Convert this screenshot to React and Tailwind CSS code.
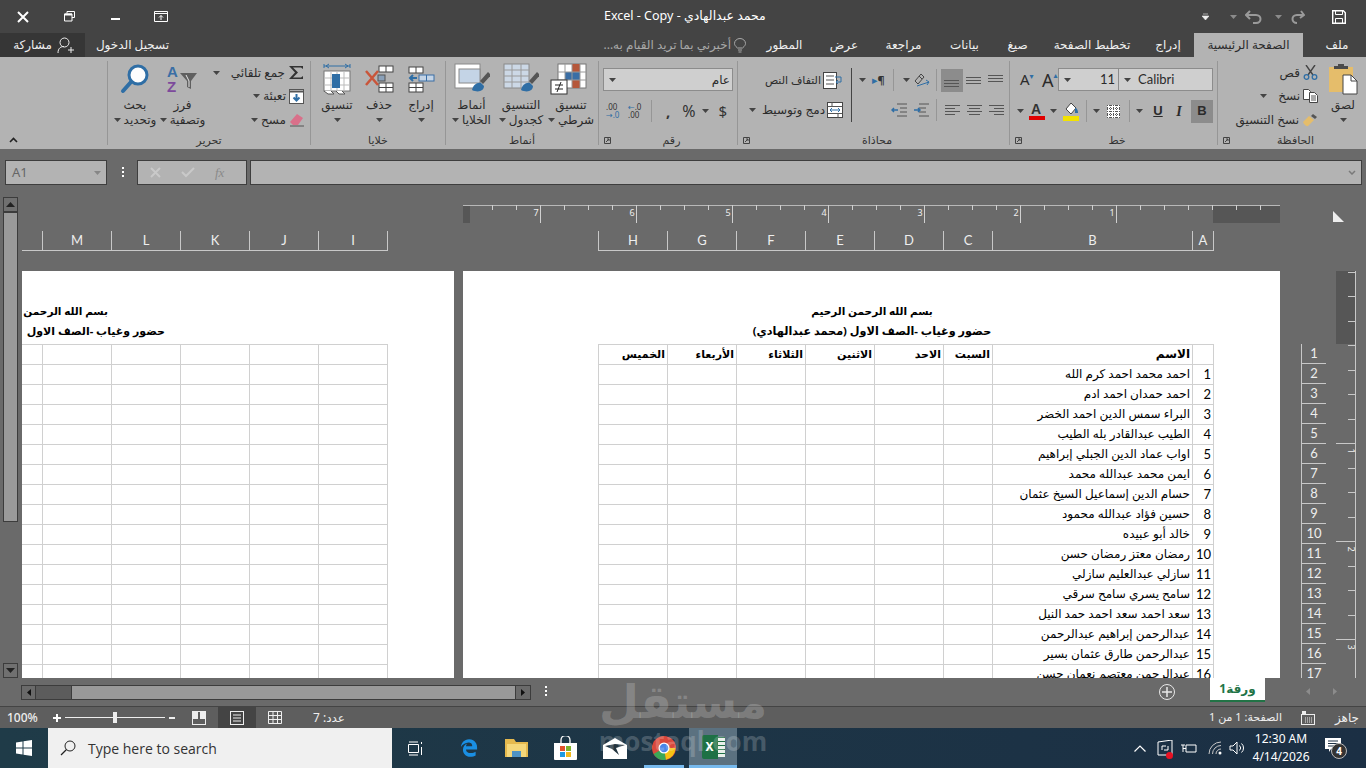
import React from 'react'
import { FaEdgeLegacy } from 'react-icons/fa6'

const names = [
  'احمد محمد احمد كرم الله',
  'احمد حمدان احمد ادم',
  'البراء سمس الدين احمد الخضر',
  'الطيب عبدالقادر بله الطيب',
  'اواب عماد الدين الجبلي إبراهيم',
  'ايمن محمد عبدالله محمد',
  'حسام الدين إسماعيل السيخ عثمان',
  'حسين فؤاد عبدالله محمود',
  'خالد أبو عبيده',
  'رمضان معتز رمضان حسن',
  'سازلي عبدالعليم سازلي',
  'سامح يسري سامح سرقي',
  'سعد احمد سعد احمد حمد النيل',
  'عبدالرحمن إبراهيم عبدالرحمن',
  'عبدالرحمن طارق عثمان بسير',
  'عبدالرحمن معتصم نعمان حسن',
  '',
]
const days = ['الخميس', 'الأربعاء', 'الثلاثاء', 'الاثنين', 'الاحد', 'السبت']
const letters = ['H', 'G', 'F', 'E', 'D', 'C', 'B', 'A']
const leftLetters = ['', 'M', 'L', 'K', 'J', 'I']
const rightCols = 'grid grid-cols-[69px_69px_69px_69px_69px_49px_200px_21px]'
const leftCols = 'grid grid-cols-[21px_69px_69px_69px_69px_69px]'
const cell = 'border-r border-b border-[#d0d0d0]'

const Caret = ({ className = '' }) => (
  <svg width="7" height="4" viewBox="0 0 7 4" className={`shrink-0 ${className}`}><path d="M0 0h7L3.5 4z" fill="#444" /></svg>
)

const Lines = ({ rows, w = 15 }) => (
  <svg width={w} height="16" viewBox={`0 0 ${w} 16`} className="shrink-0">
    {rows.map(([y, x1, x2]) => <path key={y} d={`M${x1} ${y}.5H${x2}`} stroke="#555" />)}
  </svg>
)

const Launcher = () => (
  <svg width="7" height="7" viewBox="0 0 7 7" className="shrink-0"><path d="M.5.5h6v6M.5 .5v6h6M2 5l3-3M3 2h2v2" fill="none" stroke="#444" /></svg>
)

const Group = ({ className, label, launcher, children }) => (
  <div className={`flex h-[84px] shrink-0 flex-col border-l border-[#969696] ${className}`}>
    <div className="h-[71px] shrink-0">{children}</div>
    <div className="flex h-[16px] shrink-0 items-center px-[5px] text-[11px] leading-[16px] text-[#333]">
      {launcher && <Launcher />}
      <span className="flex-1 text-center">{label}</span>
    </div>
  </div>
)

const BigBtn = ({ className, icon, l1, l2, caretSide }) => (
  <div className={`flex shrink-0 flex-col items-center ${className}`}>
    <div className="flex h-[36px] items-center justify-center">{icon}</div>
    <span className="text-[12px] leading-[15px] whitespace-nowrap">{l1}</span>
    {l2 ? (
      <span className="flex items-center gap-[3px] text-[12px] leading-[15px] whitespace-nowrap">
        {caretSide && <Caret />}{l2}
      </span>
    ) : (
      <span className="flex h-[15px] items-center"><Caret /></span>
    )}
  </div>
)

const Brush = () => (
  <g>
    <path d="M18 27c1-5 5-8 9-7l3 3c0 5-6 7-12 4z" fill="#2f6ea5" />
    <path d="M26 18l8-9 3 3-8 9z" fill="#555" />
  </g>
)

const CondIcon = () => (
  <svg width="42" height="32" viewBox="0 0 42 32">
    <rect x="8" y="1" width="28" height="24" fill="#fff" stroke="#777" />
    <rect x="22" y="1" width="8" height="8" fill="#b5573a" />
    <rect x="15" y="9" width="15" height="8" fill="#3a6ea5" />
    <rect x="22" y="17" width="8" height="8" fill="#b5573a" />
    <path d="M8 9h28M8 17h28M15 1v24M22 1v24M30 1v24" stroke="#999" fill="none" />
    <rect x="1" y="17" width="16" height="14" fill="#fff" stroke="#333" />
    <path d="M5 22h8M5 26h8M11 19l-4 10" stroke="#222" />
  </svg>
)

const TableIcon = () => (
  <svg width="36" height="32" viewBox="0 0 36 32">
    <rect x="1" y="1" width="25" height="24" fill="#ccd8e6" stroke="#8a8a8a" />
    <path d="M1 7h25M1 13h25M1 19h25M9 1v24M18 1v24" stroke="#9a9a9a" />
    <Brush />
  </svg>
)

const StyleIcon = () => (
  <svg width="36" height="32" viewBox="0 0 36 32">
    <rect x="1" y="1" width="25" height="24" fill="#fff" stroke="#8a8a8a" />
    <rect x="5" y="6" width="21" height="14" fill="#c4d4e6" stroke="#8a8a8a" />
    <Brush />
  </svg>
)

const InsertIcon = () => (
  <svg width="28" height="28" viewBox="0 0 28 28">
    <rect x="2" y="2" width="14" height="6" fill="#fff" stroke="#444" />
    <path d="M9 2v6" stroke="#444" />
    <rect x="12" y="10" width="15" height="6" fill="#c4d4e6" stroke="#3a6ea5" />
    <path d="M19.5 10v6" stroke="#3a6ea5" />
    <path d="M10 13H3M6 10l-3 3 3 3" stroke="#2f6ea5" strokeWidth="2" fill="none" />
    <rect x="2" y="18" width="14" height="9" fill="#fff" stroke="#444" />
    <path d="M2 22.5h14M9 18v9" stroke="#444" />
  </svg>
)

const DeleteIcon = () => (
  <svg width="30" height="28" viewBox="0 0 30 28">
    <rect x="15" y="1" width="14" height="6" fill="#fff" stroke="#444" />
    <path d="M22 1v6" stroke="#444" />
    <rect x="14" y="10" width="7" height="6" fill="#8aa0b8" stroke="#555" />
    <rect x="15" y="18" width="14" height="9" fill="#fff" stroke="#444" />
    <path d="M15 22.5h14M22 18v9" stroke="#444" />
    <path d="M2 6l12 14M14 6L2 20" stroke="#c9553a" strokeWidth="2.5" />
  </svg>
)

const FormatIcon = () => (
  <svg width="30" height="32" viewBox="0 0 30 32">
    <path d="M2 3h26M2 1v4M28 1v4M7 1L4 3l3 2M23 1l3 2-3 2" stroke="#2f6ea5" fill="none" />
    <rect x="2" y="8" width="26" height="20" fill="#fff" stroke="#777" />
    <path d="M2 15h26M2 22h26M9 8v20M15 8v20M22 8v20" stroke="#bbb" />
    <rect x="10" y="11" width="8" height="14" fill="#2f6ea5" />
    <path d="M2 28l4 3h6l-3-3M14 28l3 3h6l-3-3" fill="#fff" stroke="#555" />
  </svg>
)

const SortIcon = () => (
  <svg width="32" height="30" viewBox="0 0 32 30">
    <text x="0" y="13" fontSize="15" fontWeight="700" fill="#3a6ea5" fontFamily="Liberation Sans">A</text>
    <text x="0" y="28" fontSize="15" fontWeight="700" fill="#7d4a9c" fontFamily="Liberation Sans">Z</text>
    <path d="M13 9h17l-6 8v8l-4-2v-6z" fill="#5f5f5f" />
    <path d="M19 11l3 6v6" stroke="#e8e8e8" fill="none" />
  </svg>
)

const FindIcon = () => (
  <svg width="30" height="30" viewBox="0 0 30 30">
    <circle cx="18" cy="11" r="9" fill="#fdfdfd" stroke="#2f6ea5" strokeWidth="3" />
    <path d="M11 18L3 27" stroke="#2f6ea5" strokeWidth="4" strokeLinecap="round" />
  </svg>
)

const PasteIcon = () => (
  <svg width="30" height="32" viewBox="0 0 30 32">
    <rect x="1" y="4" width="24" height="25" fill="#e5bd6b" />
    <path d="M6 6h14V3h-4V1h-6v2H6z" fill="#4a4a4a" />
    <path d="M15 12h8l6 6v13H15z" fill="#fff" stroke="#444" />
    <path d="M23 12v6h6" fill="none" stroke="#444" />
  </svg>
)

const RibbonIcons = {
  cut: (
    <svg width="15" height="15" viewBox="0 0 15 15" className="shrink-0">
      <path d="M3 0l7 10M12 0L5 10" stroke="#444" strokeWidth="1.4" />
      <circle cx="3.5" cy="12" r="2.3" fill="none" stroke="#2f6ea5" strokeWidth="1.3" />
      <circle cx="11.5" cy="12" r="2.3" fill="none" stroke="#2f6ea5" strokeWidth="1.3" />
    </svg>
  ),
  copy: (
    <svg width="15" height="14" viewBox="0 0 15 14" className="shrink-0">
      <path d="M.5.5h5l2 2v8h-7z" fill="#fff" stroke="#444" />
      <path d="M6.5 3.5h5l3 3v7h-8z" fill="#fff" stroke="#444" />
      <path d="M8 7h5M8 9h5M8 11h5" stroke="#555" />
    </svg>
  ),
  painter: (
    <svg width="16" height="14" viewBox="0 0 16 14" className="shrink-0">
      <path d="M1 9l6-6 5 4-6 6c-2 1-4-2-5-4z" fill="#e5bd6b" />
      <path d="M9 3l2-2 4 3-2 2z" fill="#555" />
    </svg>
  ),
}

const AlignIcon = ({ kind, active }) => {
  const rows = {
    top: [[3, 0, 15], [6, 0, 15], [9, 0, 15]],
    mid: [[5, 0, 15], [8, 0, 15], [11, 0, 15]],
    bottom: [[8, 0, 15], [11, 0, 15], [14, 0, 15]],
    left: [[3, 0, 15], [6, 0, 10], [9, 0, 15], [12, 0, 10]],
    center: [[3, 0, 15], [6, 2, 13], [9, 0, 15], [12, 2, 13]],
    right: [[3, 0, 15], [6, 5, 15], [9, 0, 15], [12, 5, 15]],
  }[kind]
  return (
    <div className={`flex h-[23px] w-[22px] items-center justify-center ${active ? 'bg-[#8c8c8c]' : ''}`}>
      <Lines rows={rows} />
    </div>
  )
}

const Ribbon = () => (
  <div className="flex h-[92px] shrink-0 bg-[#b3b3b3] py-[4px] text-[#2b2b2b]" dir="ltr">
    <div className="flex h-[84px] w-[107px] shrink-0 items-end pb-[2px] pl-[9px]">
      <svg width="9" height="6" viewBox="0 0 9 6"><path d="M1 5l3.5-3.5L8 5" fill="none" stroke="#222" strokeWidth="1.6" /></svg>
    </div>

    <Group className="w-[203px]" label="تحرير">
      <div className="flex">
        <BigBtn className="ml-[6px] w-[42px]" icon={<FindIcon />} l1="بحث" l2="وتحديد" caretSide />
        <BigBtn className="ml-[5px] w-[43px]" icon={<SortIcon />} l1="فرز" l2="وتصفية" caretSide />
        <div className="ml-[5px] flex w-[95px] flex-col items-end text-[12px]">
          <div className="flex h-[23px] items-center gap-[3px]">
            <Caret className="mr-[8px]" />
            <span className="whitespace-nowrap">جمع تلقائي</span>
            <svg width="16" height="15" viewBox="0 0 16 15"><path d="M1 1h14v3L13 2.500H5L10 7.500 5 12.500h8L15 11v3H1l6-6.500z" fill="#333" /></svg>
          </div>
          <div className="flex h-[24px] items-center gap-[3px]">
            <Caret />
            <span>تعبئة</span>
            <svg width="15" height="15" viewBox="0 0 15 15"><rect x=".5" y=".5" width="14" height="14" fill="#fff" stroke="#555" /><path d="M.5 2.500h14" stroke="#555" strokeWidth="2" /><path d="M7.500 5v6M4.500 8.500l3 3 3-3" stroke="#2f6ea5" strokeWidth="2" fill="none" /></svg>
          </div>
          <div className="flex h-[23px] items-center gap-[3px]">
            <Caret />
            <span>مسح</span>
            <svg width="15" height="14" viewBox="0 0 15 14"><path d="M1 9l7-8 6 4-5 7H4z" fill="#d9708a" /><path d="M1 13h14" stroke="#555" /></svg>
          </div>
        </div>
      </div>
    </Group>

    <Group className="w-[135px]" label="خلايا">
      <div className="flex">
        <BigBtn className="ml-[7px] w-[38px]" icon={<FormatIcon />} l1="تنسيق" />
        <BigBtn className="ml-[6px] w-[34px]" icon={<DeleteIcon />} l1="حذف" />
        <BigBtn className="ml-[8px] w-[34px]" icon={<InsertIcon />} l1="إدراج" />
      </div>
    </Group>

    <Group className="w-[153px]" label="أنماط">
      <div className="flex pl-[2px]">
        <BigBtn className="w-[47px]" icon={<StyleIcon />} l1="أنماط" l2="الخلايا" caretSide />
        <BigBtn className="w-[52px]" icon={<TableIcon />} l1="التنسيق" l2="كجدول" caretSide />
        <BigBtn className="w-[48px]" icon={<CondIcon />} l1="تنسيق" l2="شرطي" caretSide />
      </div>
    </Group>

    <Group className="w-[139px]" label="رقم" launcher>
      <div className="flex flex-col pl-[4px] pt-[7px]">
        <div className="flex h-[23px] w-[130px] items-center justify-between border border-[#8c8c8c] bg-[#cfcfcf] pl-[5px] pr-[2px] text-[12px]">
          <Caret /><span>عام</span>
        </div>
        <div className="mt-[8px] flex h-[24px] items-center text-[#333]">
          <div className="ml-[3px] w-[16px] text-[8px] leading-[8px]">.00<div className="text-[#2f6ea5]">→.0</div></div>
          <div className="ml-[6px] w-[16px] text-[8px] leading-[8px]"><span className="text-[#2f6ea5]">←</span>.0<div>.00</div></div>
          <div className="ml-[7px] h-[22px] border-l border-[#969696]" />
          <span className="ml-[14px] text-[15px] font-bold">,</span>
          <span className="ml-[12px] text-[16px]">%</span>
          <Caret className="ml-[6px]" />
          <span className="ml-[10px] text-[15px]">$</span>
        </div>
      </div>
    </Group>

    <Group className="w-[272px]" label="محاذاة" launcher>
      <div className="flex pt-[7px]">
        <div className="flex w-[113px] flex-col items-end pr-[8px] text-[12px]">
          <div className="flex h-[24px] items-center gap-[2px]">
            <span className="text-[11px] whitespace-nowrap">التفاف النص</span>
            <svg width="20" height="17" viewBox="0 0 20 17"><rect x=".5" y=".5" width="13" height="16" fill="#fff" stroke="#444" /><path d="M3 4h8M3 8h8M3 12h8" stroke="#555" /><path d="M12 5h6v5h-5M15 8l-2 2 2 2" stroke="#2f6ea5" fill="none" /></svg>
          </div>
          <div className="mt-[6px] flex h-[24px] items-center gap-[2px]">
            <Caret className="mr-[4px]" />
            <span className="whitespace-nowrap">دمج وتوسيط</span>
            <svg width="16" height="16" viewBox="0 0 16 16"><rect x=".5" y=".5" width="15" height="15" fill="#fff" stroke="#444" /><path d="M.5 4.500h15M.5 11.500h15M5 .5v4M11 11.500v4" stroke="#555" /><path d="M3 8h10M5 6L3 8l2 2M11 6l2 2-2 2" stroke="#2f6ea5" fill="none" /></svg>
          </div>
        </div>
        <div className="h-[54px] border-l border-[#444]" />
        <div className="flex flex-col">
          <div className="flex h-[24px] items-center">
            <Caret className="ml-[7px]" />
            <span className="ml-[6px] text-[11px] font-bold text-[#333]"><span className="text-[#2f6ea5]">▸</span>¶</span>
            <div className="ml-[8px] h-[22px] border-l border-[#969696]" />
            <Caret className="ml-[9px]" />
            <svg width="17" height="17" viewBox="0 0 17 17" className="ml-[3px]"><path d="M2 9l6-7 3 3-6 7zM6 4l3 3" fill="none" stroke="#444" /><path d="M4 14l12-4M13 8l3 2-2 3" fill="none" stroke="#2f6ea5" /></svg>
            <div className="ml-[6px] h-[22px] border-l border-[#969696]" />
            <div className="ml-[4px]"><AlignIcon kind="bottom" active /></div>
            <AlignIcon kind="mid" />
            <AlignIcon kind="top" />
          </div>
          <div className="mt-[6px] flex h-[24px] items-center">
            <svg width="16" height="14" viewBox="0 0 16 14" className="ml-[39px]"><path d="M6 1h10M9 5h7M9 9h7M6 13h10" stroke="#555" /><path d="M7 7H1M3 5L1 7l2 2" stroke="#2f6ea5" strokeWidth="1.500" fill="none" /></svg>
            <svg width="16" height="14" viewBox="0 0 16 14" className="ml-[6px]"><path d="M0 1h10M0 5h7M0 9h7M0 13h10" stroke="#555" transform="translate(6)" /><path d="M1 7h6M5 5l2 2-2 2" stroke="#2f6ea5" strokeWidth="1.500" fill="none" /></svg>
            <div className="ml-[7px] h-[22px] border-l border-[#969696]" />
            <div className="ml-[4px]"><AlignIcon kind="left" /></div>
            <AlignIcon kind="center" />
            <AlignIcon kind="right" />
          </div>
        </div>
      </div>
    </Group>

    <Group className="w-[208px]" label="خط" launcher>
      <div className="flex flex-col pt-[7px]">
        <div className="flex h-[23px] items-center">
          <span className="ml-[10px] w-[14px] text-[15px] leading-none">A<span className="align-top text-[8px] text-[#2f6ea5]">▾</span></span>
          <span className="ml-[8px] w-[16px] text-[18px] leading-none">A<span className="align-top text-[8px] text-[#2f6ea5]">▴</span></span>
          <div className="flex h-[23px] w-[61px] items-center justify-between border border-[#8c8c8c] bg-[#cfcfcf] pl-[5px] pr-[3px] font-['Lato',sans-serif] text-[13px]">
            <Caret /><span>11</span>
          </div>
          <div className="ml-[-1px] flex h-[23px] w-[95px] items-center gap-[7px] border border-[#8c8c8c] bg-[#cfcfcf] pl-[5px] font-['Lato',sans-serif] text-[13px]">
            <Caret /><span>Calibri</span>
          </div>
        </div>
        <div className="mt-[8px] flex h-[24px] items-center">
          <Caret className="ml-[7px]" />
          <svg width="16" height="18" viewBox="0 0 16 18" className="ml-[5px]"><text x="2" y="12" fontSize="14" fontWeight="700" fill="#333" fontFamily="Liberation Sans">A</text><rect y="14" width="16" height="4" fill="#e00000" /></svg>
          <Caret className="ml-[5px]" />
          <svg width="16" height="19" viewBox="0 0 16 19" className="ml-[6px]"><path d="M3 7l5-6 5 5-5 6z" fill="#fff" stroke="#444" /><path d="M12 6c2 0 3 2 3 5h-3z" fill="#2f6ea5" /><rect y="14" width="16" height="5" fill="#f2e200" /></svg>
          <div className="ml-[7px] h-[22px] border-l border-[#969696]" />
          <Caret className="ml-[6px]" />
          <svg width="13" height="13" viewBox="0 0 13 13" className="ml-[7px]"><rect width="13" height="13" fill="#fff" /><path d="M0 3.500h13M0 6.500h13M0 9.500h13M3.500 0v13M6.500 0v13M9.500 0v13M.5 0v13M12.500 0v13M0 .5h13M0 12.500h13" stroke="#555" strokeDasharray="1 1" /></svg>
          <div className="ml-[9px] h-[22px] border-l border-[#969696]" />
          <Caret className="ml-[6px]" />
          <span className="ml-[9px] w-[12px] text-center font-['Liberation_Sans',sans-serif] text-[13px] font-bold underline">U</span>
          <span className="ml-[9px] w-[12px] text-center font-['Liberation_Serif',serif] text-[14px] font-bold italic">I</span>
          <div className="ml-[6px] flex h-[23px] w-[22px] items-center justify-center bg-[#8c8c8c] font-['Liberation_Sans',sans-serif] text-[13px] font-bold">B</div>
        </div>
      </div>
    </Group>

    <Group className="flex-1" label="الحافظة" launcher>
      <div className="flex">
        <div className="flex w-[112px] flex-col items-end pr-[12px] text-[12px]">
          <div className="flex h-[23px] items-center gap-[3px]"><span>قص</span>{RibbonIcons.cut}</div>
          <div className="flex h-[24px] items-center gap-[3px]"><Caret className="mr-[8px]" /><span>نسخ</span>{RibbonIcons.copy}</div>
          <div className="flex h-[23px] items-center gap-[3px]"><span className="whitespace-nowrap">نسخ التنسيق</span>{RibbonIcons.painter}</div>
        </div>
        <BigBtn className="w-[26px]" icon={<PasteIcon />} l1="لصق" />
      </div>
    </Group>
  </div>
)

const TitleBar = () => (
  <div className="flex h-[33px] shrink-0 items-center bg-[#444444] text-white" dir="ltr">
    <div className="flex w-[46px] justify-center">
      <svg width="12" height="12" viewBox="0 0 12 12"><path d="M1 1l10 10M11 1L1 11" stroke="#fff" strokeWidth="2" /></svg>
    </div>
    <div className="flex w-[46px] justify-center">
      <svg width="11" height="11" viewBox="0 0 11 11"><path d="M3 2.500V.5h7.500v6H8M.5 3h7.500v7H.5z" fill="none" stroke="#fff" /><path d="M.5 3.500H8" stroke="#fff" strokeWidth="2" /></svg>
    </div>
    <div className="flex w-[46px] justify-center pt-[5px]"><div className="h-[2px] w-[9px] bg-white" /></div>
    <div className="flex w-[46px] justify-center">
      <svg width="14" height="11" viewBox="0 0 14 11"><path d="M.5.5h13v10H.5zM.5 2.500h13" fill="none" stroke="#fff" /><path d="M7 9V4.500M5 6.500l2-2 2 2" fill="none" stroke="#fff" /></svg>
    </div>
    <span className="ml-[420px] text-[12.5px] whitespace-nowrap" dir="rtl">محمد عبدالهادي - Excel - Copy</span>
    <div className="ml-auto flex items-center">
      <svg width="7" height="7" viewBox="0 0 7 7" className="mr-[21px]"><path d="M1 1h5M0 3h7l-3.500 4z" fill="#eee" stroke="#eee" strokeWidth=".6" /></svg>
      <Caret className="mr-[8px] opacity-60 invert" />
      <svg width="17" height="14" viewBox="0 0 17 14" className="mr-[13px]"><path d="M5 1L1 5l4 4M1 5h10c6 0 6 8 0 8H8" fill="none" stroke="#9a9a9a" strokeWidth="2" /></svg>
      <Caret className="mr-[8px] opacity-60 invert" />
      <svg width="15" height="14" viewBox="0 0 15 14" className="mr-[27px]"><path d="M11 1l3 4-4 3M14 5H7C1 5 1 13 7 13" fill="none" stroke="#9a9a9a" strokeWidth="2" /></svg>
      <svg width="14" height="14" viewBox="0 0 14 14" className="mr-[20px]"><path d="M.7.7h10.600l2 2v10.600H.7z" fill="none" stroke="#fff" strokeWidth="1.400" /><path d="M3.500 1v3.500h7V1M3.500 13V8.500h7V13" fill="none" stroke="#fff" /></svg>
    </div>
  </div>
)

const Tabs = () => {
  const tab = 'shrink-0 text-center text-[12px] leading-[24px] whitespace-nowrap'
  return (
    <div className="flex h-[24px] shrink-0 bg-[#444444] text-[#f0f0f0]" dir="ltr">
      <div className="flex w-[85px] shrink-0 items-center justify-center gap-[5px] bg-[#363636] pl-[2px] text-[12px]">
        <span>مشاركة</span>
        <svg width="17" height="17" viewBox="0 0 17 17"><circle cx="7.500" cy="5.500" r="4.500" fill="none" stroke="#eee" /><path d="M1 16c0-5 3-6.500 6-6.500M11 13h6M14 10v6" fill="none" stroke="#eee" /></svg>
      </div>
      <div className={`${tab} w-[95px]`}>تسجيل الدخول</div>
      <div className="flex-1" />
      <div className="flex w-[167px] shrink-0 items-center justify-end gap-[3px] pr-[6px] text-[12px] whitespace-nowrap text-[#a8a8a8]">
        <span dir="rtl">أخبرني بما تريد القيام به...</span>
        <svg width="12" height="15" viewBox="0 0 12 15"><path d="M3.500 10C1 8 .5 6.500.5 5.500a5.500 5 0 0 1 11 0c0 1-.5 2.500-3 4.500zM4 12h4M4.500 14h3" fill="none" stroke="#a8a8a8" /></svg>
      </div>
      <div className={`${tab} w-[65px]`}>المطور</div>
      <div className={`${tab} w-[54px]`}>عرض</div>
      <div className={`${tab} w-[65px]`}>مراجعة</div>
      <div className={`${tab} w-[57px]`}>بيانات</div>
      <div className={`${tab} w-[49px]`}>صيغ</div>
      <div className={`${tab} w-[100px]`}>تخطيط الصفحة</div>
      <div className={`${tab} w-[52px]`}>إدراج</div>
      <div className={`${tab} w-[109px] bg-[#b3b3b3] text-[#2b2b2b]`}>الصفحة الرئيسية</div>
      <div className={`${tab} w-[63px] pl-[5px]`}>ملف</div>
    </div>
  )
}

const FormulaBar = () => (
  <div className="flex h-[48px] shrink-0 items-start bg-[#6a6a6a] pt-[11px]" dir="ltr">
    <div className="ml-[5px] flex h-[25px] w-[102px] items-center justify-between border border-[#3e3e3e] bg-[#b3b3b3] pl-[6px] pr-[5px] text-[13px] text-[#666]">
      <span>A1</span><Caret className="opacity-40" />
    </div>
    <div className="ml-[13px] flex w-[5px] flex-col items-center gap-[2px] pt-[7px]">
      <i className="h-[2px] w-[2px] bg-white" /><i className="h-[2px] w-[2px] bg-white" /><i className="h-[2px] w-[2px] bg-white" />
    </div>
    <div className="ml-[12px] flex h-[25px] w-[110px] items-center gap-[20px] border border-[#3e3e3e] bg-[#b3b3b3] pl-[12px]">
      <svg width="11" height="11" viewBox="0 0 11 11"><path d="M1 1l9 9M10 1l-9 9" stroke="#c9c9c9" strokeWidth="2" /></svg>
      <svg width="14" height="11" viewBox="0 0 14 11"><path d="M1 5l4 4 8-8" stroke="#c9c9c9" strokeWidth="2" fill="none" /></svg>
      <span className="font-['Liberation_Serif',serif] text-[13px] italic text-[#8a8a8a]">fx</span>
    </div>
    <div className="ml-[3px] flex h-[25px] w-[1112px] items-center justify-end border border-[#3e3e3e] bg-[#b3b3b3] pr-[5px]">
      <svg width="8" height="5" viewBox="0 0 8 5"><path d="M1 1l3 3 3-3" fill="none" stroke="#7a7a7a" strokeWidth="1.500" /></svg>
    </div>
  </div>
)

const HRuler = () => {
  const ticks = Array.from({ length: 31 }, (_, i) => 750 - i * 24)
  const nums = [1, 2, 3, 4, 5, 6, 7]
  return (
    <svg width="817" height="18" viewBox="0 0 817 18" className="block">
      <rect width="7" height="18" fill="#565656" />
      <rect x="750" width="67" height="18" fill="#565656" />
      <path d="M0 .5H817" stroke="#b8b8b8" />
      {ticks.map((x) => <path key={x} d={`M${x - 0.5} 0V5`} stroke="#d0d0d0" />)}
      {[774, 798].map((x) => <path key={x} d={`M${x - 0.5} 0V5`} stroke="#d0d0d0" />)}
      {nums.map((n) => <path key={n} d={`M${750 - n * 96 - 0.5} 0V18`} stroke="#d0d0d0" />)}
      {nums.map((n) => <text key={n} x={750 - n * 96 - 5} y="11" fontSize="9" fill="#eee" textAnchor="middle">{n}</text>)}
    </svg>
  )
}

const VRuler = () => (
  <svg width="20" height="407" viewBox="0 0 20 407" className="ml-[10px] block shrink-0">
    <rect width="19" height="73" fill="#565656" />
    <path d="M19.500 0V407" stroke="#c8c8c8" />
    {Array.from({ length: 16 }, (_, i) => {
      const y = Math.round(74 + (i - 3) * 24.5) + 0.5
      return <path key={i} d={`M${(i - 3) % 4 === 0 && i > 3 ? 0 : 12} ${y}H19`} stroke="#c8c8c8" />
    })}
    {[1, 2, 3].map((n) => (
      <text key={n} x="12" y={74 + n * 98 + 8} fontSize="9" fill="#eee" textAnchor="middle" transform={`rotate(90 12 ${74 + n * 98 + 8})`}>{n}</text>
    ))}
  </svg>
)

const ColHeaders = ({ cols, items, className }) => (
  <div className={`${cols} h-[20px] border-b border-[#c8c8c8] ${className}`}>
    {items.map((l) => (
      <div key={l || 'x'} className="border-r border-[#c8c8c8] text-center font-['Lato',sans-serif] text-[13px] leading-[19px] text-[#eee]">{l}</div>
    ))}
  </div>
)

const RightPage = () => (
  <div className="flex h-[481px] w-[817px] shrink-0 flex-col">
    <div className="mt-[8px]"><HRuler /></div>
    <ColHeaders cols={rightCols} items={letters} className="mt-[8px] ml-[135px] w-[616px] border-l" />
    <div className="mt-[20px] flex-1 overflow-hidden bg-white pt-[30px] text-black" dir="ltr">
      <div className="ml-[135px] w-[548px] text-center leading-[20px] font-bold" dir="rtl">
        <div className="text-[10.5px]">بسم الله الرحمن الرحيم</div>
        <div className="text-[11.25px]">حضور وغياب -الصف الاول (محمد عبدالهادي)</div>
      </div>
      <div className="mt-[3px] ml-[135px] w-[616px] border-t border-l border-[#d0d0d0]">
        <div className={`${rightCols} h-[20px]`}>
          {days.map((d) => <div key={d} className={`${cell} px-[2px] text-right text-[11px] leading-[18px] font-bold whitespace-nowrap`}>{d}</div>)}
          <div className={`${cell} px-[2px] text-right text-[12px] leading-[18px] font-bold`}>الاسم</div>
          <div className={cell} />
        </div>
        {names.map((name, i) => (
          <div key={i} className={`${rightCols} h-[20px]`}>
            {[0, 1, 2, 3, 4, 5].map((c) => <div key={c} className={cell} />)}
            <div className={`${cell} px-[2px] text-right text-[12px] leading-[17px] whitespace-nowrap`}>{name}</div>
            <div className={`${cell} pr-[2px] text-right font-['Lato',sans-serif] text-[13px] leading-[19px]`}>{name ? i + 1 : ''}</div>
          </div>
        ))}
      </div>
    </div>
  </div>
)

const LeftPage = () => (
  <div className="flex h-[481px] w-[432px] shrink-0 flex-col">
    <ColHeaders cols={leftCols} items={leftLetters} className="mt-[34px] w-[366px]" />
    <div className="mt-[20px] flex-1 overflow-hidden bg-white pt-[30px] leading-[20px] font-bold text-black">
      <div className="w-[86px] text-right text-[10.5px] whitespace-nowrap" dir="rtl">بسم الله الرحمن</div>
      <div className="w-[143px] text-right text-[11px] whitespace-nowrap" dir="rtl">حضور وغياب -الصف الاول</div>
      <div className="mt-[3px] w-[366px] border-t border-[#d0d0d0]">
        {Array.from({ length: 17 }, (_, i) => (
          <div key={i} className={`${leftCols} h-[20px]`}>
            {[0, 1, 2, 3, 4, 5].map((c) => <div key={c} className={cell} />)}
          </div>
        ))}
      </div>
    </div>
  </div>
)

const Gutter = () => (
  <div className="flex h-[481px] flex-1 flex-col">
    <div className="flex h-[74px] justify-end pt-[14px] pr-[22px]">
      <svg width="11" height="11" viewBox="0 0 11 11"><path d="M0 0l11 11H0z" fill="#eee" /></svg>
    </div>
    <div className="flex flex-1 overflow-hidden pl-[21px]">
      <div className="flex w-[25px] flex-col pt-[73px]">
        <div className="h-px bg-[#c8c8c8]" />
        {Array.from({ length: 17 }, (_, i) => (
          <div key={i} className="h-[20px] shrink-0 border-b border-l border-[#c8c8c8] text-center font-['Lato',sans-serif] text-[13px] leading-[19px] text-[#eee]">{i + 1}</div>
        ))}
      </div>
      <VRuler />
    </div>
  </div>
)

const VScroll = () => (
  <div className="flex w-[22px] shrink-0 flex-col pl-[3px]">
    <div className="flex h-[15px] w-[15px] items-center justify-center border border-[#3c3c3c] bg-[#707070]">
      <svg width="9" height="5" viewBox="0 0 9 5"><path d="M0 5h9L4.500 0z" fill="#222" /></svg>
    </div>
    <div className="h-[310px] w-[15px] border border-[#3c3c3c] bg-[#9a9a9a]" />
    <div className="flex-1" />
    <div className="flex h-[15px] w-[15px] items-center justify-center border border-[#3c3c3c] bg-[#707070]">
      <svg width="9" height="5" viewBox="0 0 9 5"><path d="M0 0h9L4.500 5z" fill="#222" /></svg>
    </div>
  </div>
)

const SheetTabs = () => (
  <div className="flex h-[29px] shrink-0 items-start border-b border-[#444] bg-[#6a6a6a]" dir="ltr">
    <div className="mt-[7px] ml-[21px] flex h-[15px] w-[510px] items-stretch border border-[#3c3c3c]">
      <div className="flex w-[14px] items-center justify-center border-r border-[#3c3c3c]">
        <svg width="4" height="7" viewBox="0 0 4 7"><path d="M4 0v7L0 3.500z" fill="#111" /></svg>
      </div>
      <div className="w-[35px] bg-[#5c5c5c]" />
      <div className="flex-1 border-x border-[#3c3c3c] bg-[#999999]" />
      <div className="flex w-[14px] items-center justify-center">
        <svg width="4" height="7" viewBox="0 0 4 7"><path d="M0 0v7l4-3.500z" fill="#111" /></svg>
      </div>
    </div>
    <div className="mt-[8px] ml-[14px] flex flex-col gap-[2px]">
      <i className="h-[2px] w-[2px] bg-white" /><i className="h-[2px] w-[2px] bg-white" /><i className="h-[2px] w-[2px] bg-white" />
    </div>
    <div className="mt-[6px] ml-[612px] flex h-[16px] w-[16px] items-center justify-center rounded-full border border-[#e8e8e8]">
      <svg width="10" height="10" viewBox="0 0 10 10"><path d="M5 0v10M0 5h10" stroke="#e8e8e8" strokeWidth="1.500" /></svg>
    </div>
    <div className="ml-[35px] flex h-[24px] w-[55px] items-center justify-center border-b-2 border-[#217346] bg-white text-[12px] font-bold text-[#217346]">ورقة1</div>
    <svg width="4" height="7" viewBox="0 0 4 7" className="mt-[10px] ml-[41px]"><path d="M4 0v7L0 3.500z" fill="#8c8c8c" /></svg>
    <svg width="4" height="7" viewBox="0 0 4 7" className="mt-[10px] ml-[23px]"><path d="M0 0v7l4-3.500z" fill="#8c8c8c" /></svg>
  </div>
)

const StatusBar = () => (
  <div className="flex h-[21px] shrink-0 items-center bg-[#5e5e5e] text-[12px] text-[#eee]" dir="ltr">
    <span className="ml-[7px] w-[46px] text-[12px] font-medium">100%</span>
    <svg width="8" height="8" viewBox="0 0 8 8"><path d="M4 0v8M0 4h8" stroke="#fff" strokeWidth="2" /></svg>
    <div className="ml-[4px] flex h-px w-[100px] items-center justify-center bg-[#eee]"><div className="h-[11px] w-[4px] shrink-0 bg-[#eee]" /></div>
    <div className="ml-[4px] h-[2px] w-[6px] bg-[#eee]" />
    <svg width="14" height="14" viewBox="0 0 14 14" className="ml-[17px]"><rect x=".5" y=".5" width="13" height="13" fill="none" stroke="#eee" /><path d="M1 1h5v7H1zM8 1h5v7H8z" fill="#eee" /></svg>
    <div className="ml-[12px] flex h-[21px] w-[38px] items-center justify-center bg-[#444]">
      <svg width="14" height="14" viewBox="0 0 14 14"><rect x=".5" y=".5" width="13" height="13" fill="none" stroke="#eee" /><path d="M3 4h8M3 7h8M3 10h8" stroke="#eee" /></svg>
    </div>
    <svg width="14" height="13" viewBox="0 0 14 13" className="ml-[12px]"><path d="M.5.5h13v12H.5zM.5 4.500h13M.5 8.500h13M5 .5v12M9.500 .5v12" fill="none" stroke="#eee" /></svg>
    <span className="ml-[31px] whitespace-nowrap" dir="rtl">عدد: 7</span>
    <span className="ml-auto text-[11px] whitespace-nowrap" dir="rtl">الصفحة: 1 من 1</span>
    <svg width="14" height="14" viewBox="0 0 14 14" className="ml-[19px]"><rect x=".5" y="3.500" width="13" height="10" fill="none" stroke="#eee" /><rect x="1" y="0" width="4" height="4" fill="#eee" /><path d="M4 7h7M4 9h7M4 11h7" stroke="#eee" strokeDasharray="1 1" /></svg>
    <span className="mr-[7px] ml-[20px]">جاهز</span>
  </div>
)

const Taskbar = () => (
  <div className="flex h-[40px] shrink-0 items-center bg-gradient-to-r from-[#1f3b48] to-[#1b2f44] text-white" dir="ltr">
    <svg width="16" height="16" viewBox="0 0 16 16" className="ml-[16px]"><path d="M0 2.500l6.500-1v6H0zM7.500 1.300L16 0v7.500H7.500zM0 8.500h6.500v6L0 13.500zM7.500 8.500H16V16l-8.500-1.300z" fill="#fff" /></svg>
    <div className="ml-[16px] flex h-[40px] w-[344px] items-center gap-[12px] bg-[#f0f0f0] pl-[12px] font-['Open_Sans',sans-serif] text-[14px] text-[#333]">
      <svg width="16" height="16" viewBox="0 0 16 16"><circle cx="10" cy="6" r="5" fill="none" stroke="#222" /><path d="M6.500 9.500L1 15" stroke="#222" strokeWidth="1.300" /></svg>
      <span>Type here to search</span>
    </div>
    <svg width="16" height="15" viewBox="0 0 16 15" className="ml-[16px]"><path d="M.5 3.500h10v8H.5zM1 1h9M1 14h9M13.500 1v2M13.500 6v8" fill="none" stroke="#fff" /></svg>
    <div className="ml-[36px] text-[18px] text-[#1a8fe3]"><FaEdgeLegacy /></div>
    <svg width="23" height="20" viewBox="0 0 23 20" className="ml-[27px]"><path d="M0 1h9l2 3h12v15H0z" fill="#e5b94e" /><path d="M2 6h19v13H2z" fill="#f5d77a" /><path d="M7 13h9v6H7z" fill="#4f93c4" /></svg>
    <svg width="23" height="24" viewBox="0 0 23 24" className="ml-[26px]"><path d="M7 7V4a4 4 0 0 1 9 0v3" fill="none" stroke="#fff" strokeWidth="1.300" /><path d="M0 7h23v16a1 1 0 0 1-1 1H1a1 1 0 0 1-1-1z" fill="#fff" /><path d="M6 10h5v5H6z" fill="#e2522c" /><path d="M12 10h5v5h-5z" fill="#7fb22c" /><path d="M6 16h5v5H6z" fill="#1f9ae0" /><path d="M12 16h5v5h-5z" fill="#f2b91c" /></svg>
    <svg width="24" height="21" viewBox="0 0 24 21" className="ml-[26px]"><path d="M0 7L12 0l12 7v14H0z" fill="#fff" /><path d="M2 8l10-2 10 1-9 3 3 7-7-6z" fill="#23343f" /></svg>
    <div className="ml-[17px] flex h-[40px] w-[40px] flex-col items-center justify-center border-b-[3px] border-[#76b9ed] pt-[3px]">
      <svg width="24" height="24" viewBox="0 0 24 24"><circle cx="12" cy="12" r="12" fill="#d9483b" /><path d="M12 12L1.600 18A12 12 0 0 0 14 23.800z" fill="#3aa757" /><path d="M12 12h11.400A12 12 0 0 1 14 23.800z" fill="#f6c213" /><circle cx="12" cy="12" r="5.500" fill="#fff" /><circle cx="12" cy="12" r="4.300" fill="#4a86e8" /></svg>
    </div>
    <div className="ml-[5px] flex h-[40px] w-[48px] items-center justify-center border-b-[3px] border-[#76b9ed] bg-[#5b7180]">
      <div className="flex h-[24px] items-center">
        <div className="flex h-[24px] w-[16px] items-center justify-center rounded-l-[2px] bg-[#1e7145] text-[12px] font-bold">X</div>
        <div className="h-[20px] w-[7px] bg-[#e8efe9] bg-[linear-gradient(#1e7145_1px,transparent_1px)] bg-[length:7px_4px]" />
      </div>
    </div>
    <div className="ml-auto flex items-center">
      <svg width="12" height="7" viewBox="0 0 12 7" className="mr-[11px]"><path d="M.5 6.500L6 1l5.500 5.500" fill="none" stroke="#fff" strokeWidth="1.200" /></svg>
      <div className="relative mr-[8px] h-[16px] w-[16px]">
        <svg width="16" height="16" viewBox="0 0 16 16"><path d="M1 2l14-2v15H1z" fill="none" stroke="#fff" /><path d="M5 10V6h4M11 6v4H7" fill="none" stroke="#fff" /></svg>
        <div className="absolute right-0 bottom-[-3px] h-[7px] w-[7px] rounded-full bg-[#e81123]" />
      </div>
      <svg width="16" height="12" viewBox="0 0 16 12" className="mr-[11px]"><path d="M5 3h10v7H5zM5 6.500H2M2 3v7M0 3h4" fill="none" stroke="#fff" /></svg>
      <svg width="14" height="14" viewBox="0 0 14 14" className="mr-[7px]"><path d="M1 13A12 12 0 0 1 13 1M4.500 13A8.500 8.500 0 0 1 13 4.500M8 13A5 5 0 0 1 13 8" fill="none" stroke="#c8c8c8" /><circle cx="12" cy="12" r="1.500" fill="#fff" /></svg>
      <svg width="16" height="14" viewBox="0 0 16 14" className="mr-[11px]"><path d="M1 5h3l4-4v12L4 9H1zM10.500 4.500a3.500 3.500 0 0 1 0 5M12.500 2.500a6 6 0 0 1 0 9" fill="none" stroke="#fff" /></svg>
      <div className="mr-[19px] flex w-[50px] flex-col items-center text-[12px] leading-[18px] whitespace-nowrap">
        <span>12:30 AM</span>
        <span>4/14/2026</span>
      </div>
      <div className="relative mr-[21px] h-[20px] w-[20px]">
        <svg width="16" height="15" viewBox="0 0 16 15"><path d="M0 0h16v11H6l-2 3v-3H0z" fill="#fff" /><path d="M3 3h10M3 5.500h10M3 8h6" stroke="#1b2f44" /></svg>
        <div className="absolute right-[-2px] bottom-[-1px] flex h-[16px] w-[16px] items-center justify-center rounded-full border border-[#bbb] bg-[#333] text-[10px] font-bold">4</div>
      </div>
    </div>
  </div>
)

export default function App() {
  return (
    <div className="relative flex h-[768px] w-[1366px] flex-col overflow-hidden bg-[#6a6a6a] font-['Noto_Sans','DejaVu_Sans',sans-serif]">
      <TitleBar />
      <Tabs />
      <Ribbon />
      <FormulaBar />
      <div className="flex h-[481px] shrink-0 overflow-hidden" dir="ltr">
        <VScroll />
        <LeftPage />
        <div className="w-[9px] shrink-0" />
        <RightPage />
        <Gutter />
      </div>
      <SheetTabs />
      <StatusBar />
      <Taskbar />
      <div className="pointer-events-none absolute top-[672px] left-[600px] flex w-[166px] flex-col items-center font-bold text-white/20">
        <span className="text-[46px] leading-[56px] whitespace-nowrap">مستقل</span>
        <span className="font-['Open_Sans',sans-serif] text-[26px] leading-[26px]">mostaql.com</span>
      </div>
    </div>
  )
}
